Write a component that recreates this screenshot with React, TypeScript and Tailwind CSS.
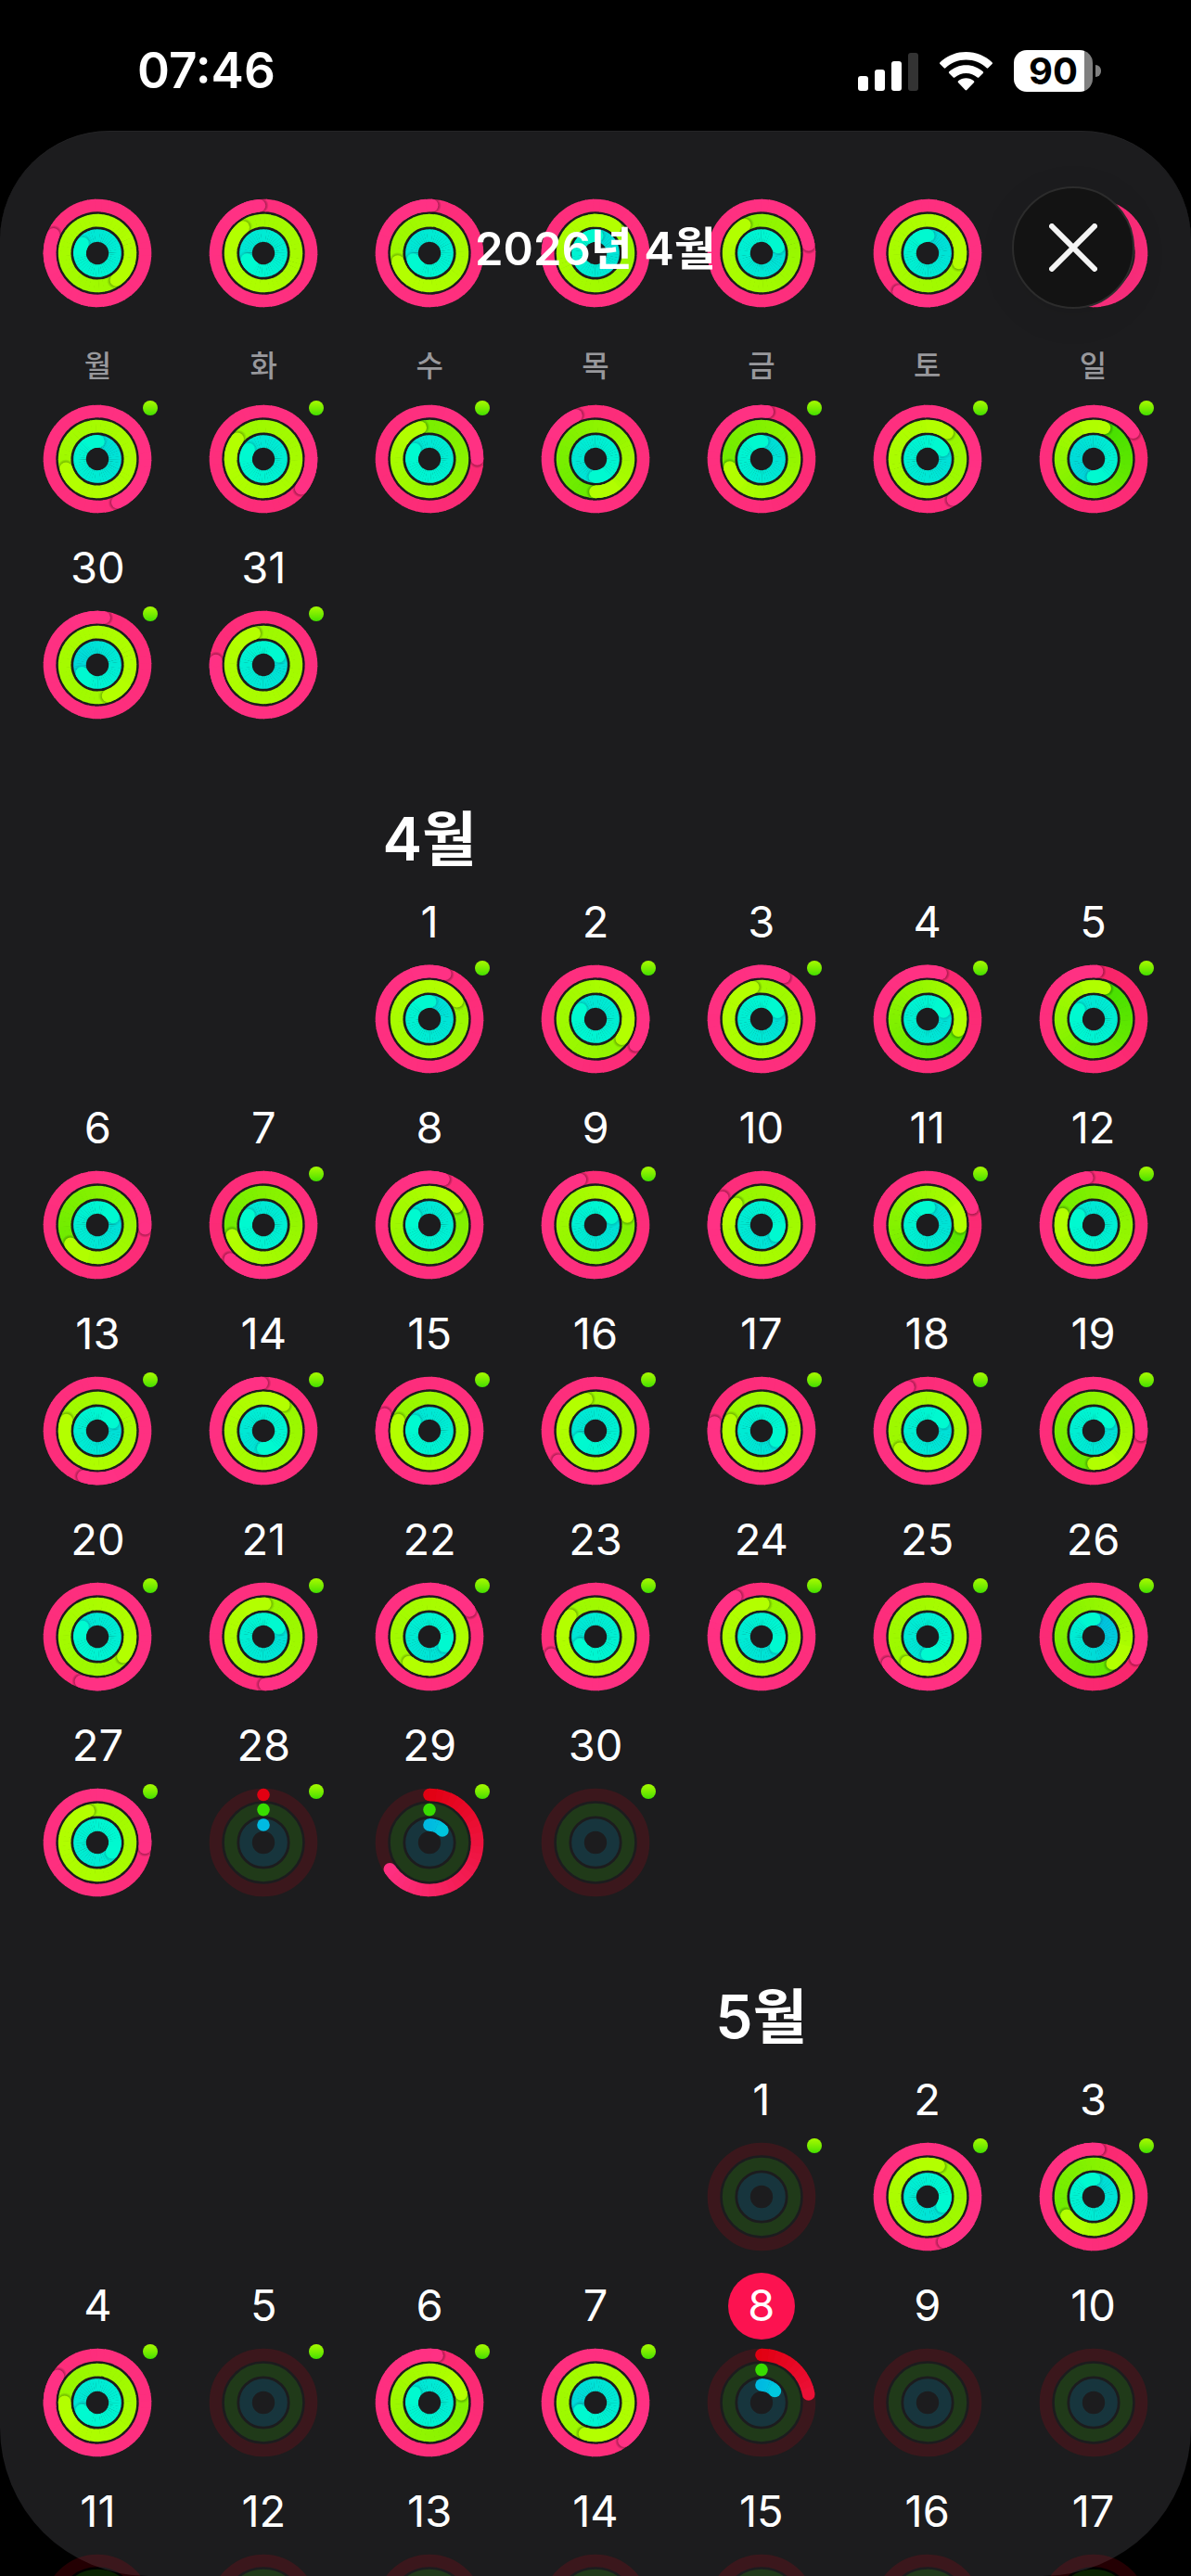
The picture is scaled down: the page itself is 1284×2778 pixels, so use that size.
import { useId } from "react";
import clsx from "clsx";

// [completed laps, degrees into the current lap]
type Ring = [number, number];

interface Day {
  label?: string;
  rings?: [Ring, Ring, Ring];
  workout?: boolean;
  today?: boolean;
}

// depth: how far the colour falls back under the tip, shade: tip shadow strength
const TRACKS = [
  { r: 51.5, from: [226, 0, 18], to: [255, 49, 132], depth: 0.5, shade: 0.8 },
  { r: 35.4, from: [56, 220, 0], to: [180, 255, 0], depth: 0.95, shade: 0.65 },
  { r: 19, from: [0, 186, 225], to: [0, 250, 208], depth: 0.95, shade: 0.3 },
];
const STROKE = 13.6;

const MARCH_PREVIOUS: Day[] = [
  { rings: [[6, 293], [5, 145], [2, 303]] },
  { rings: [[6, 355], [5, 322], [2, 248]] },
  { rings: [[6, 3], [4, 255], [2, 248]] },
  { rings: [[6, 285], [4, 37], [2, 5]] },
  { rings: [[6, 80], [2, 329], [2, 70]] },
  { rings: [[6, 217], [5, 107], [2, 2]] },
  { rings: [[3, 300], [3, 200], [2, 100]] },
];

const MARCH_CURRENT: Day[] = [
  { rings: [[6, 155], [5, 253], [2, 3]], workout: true },
  { rings: [[4, 128], [4, 308], [2, 303]], workout: true },
  { rings: [[3, 90], [1, 344], [2, 303]], workout: true },
  { rings: [[4, 336], [1, 180], [2, 182]] },
  { rings: [[3, 7], [1, 255], [2, 2]], workout: true },
  { rings: [[6, 148], [4, 37], [2, 60]], workout: true },
  { rings: [[3, 56], [1, 19], [1, 182]], workout: true },
];

const MARCH_LAST: Day[] = [
  { label: "30", rings: [[5, 8], [5, 161], [1, 242]], workout: true },
  { label: "31", rings: [[4, 275], [4, 344], [2, 61]], workout: true },
];

const APRIL: Day[] = [
  { label: "1", rings: [[5, 19], [4, 57], [2, 2]], workout: true },
  { label: "2", rings: [[4, 123], [3, 127], [2, 303]], workout: true },
  { label: "3", rings: [[5, 28], [4, 345], [2, 66]], workout: true },
  { label: "4", rings: [[3, 16], [1, 110], [2, 65]], workout: true },
  { label: "5", rings: [[2, 4], [1, 20], [2, 303]], workout: true },
  { label: "6", rings: [[4, 94], [1, 235], [2, 63]] },
  { label: "7", rings: [[3, 224], [1, 252], [2, 303]], workout: true },
  { label: "8", rings: [[5, 17], [2, 56], [2, 303]] },
  { label: "9", rings: [[3, 341], [2, 75], [2, 66]], workout: true },
  { label: "10", rings: [[5, 305], [3, 310], [2, 127]] },
  { label: "11", rings: [[3, 69], [1, 93], [2, 5]], workout: true },
  { label: "12", rings: [[3, 352], [1, 289], [2, 303]], workout: true },
  { label: "13", rings: [[5, 197], [5, 289], [2, 61]], workout: true },
  { label: "14", rings: [[5, 358], [4, 38], [2, 181]], workout: true },
  { label: "15", rings: [[5, 290], [3, 289], [2, 303]], workout: true },
  { label: "16", rings: [[5, 231], [4, 344], [2, 243]], workout: true },
  { label: "17", rings: [[4, 280], [4, 289], [2, 125]], workout: true },
  { label: "18", rings: [[4, 336], [4, 237], [2, 61]], workout: true },
  { label: "19", rings: [[3, 95], [1, 180], [2, 61]], workout: true },
  { label: "20", rings: [[5, 200], [4, 128], [2, 303]], workout: true },
  { label: "21", rings: [[6, 178], [4, 3], [2, 61]], workout: true },
  { label: "22", rings: [[5, 57], [5, 219], [2, 122]], workout: true },
  { label: "23", rings: [[5, 248], [4, 310], [2, 243]], workout: true },
  { label: "24", rings: [[4, 327], [4, 3], [2, 125]], workout: true },
  { label: "25", rings: [[5, 236], [4, 219], [2, 181]], workout: true },
  { label: "26", rings: [[2, 117], [1, 145], [1, 3]], workout: true },
  { label: "27", rings: [[6, 96], [5, 344], [3, 124]], workout: true },
  { label: "28", rings: [[0, 0], [0, 0], [0, 0]], workout: true },
  { label: "29", rings: [[0, 236], [0, 0], [0, 47]], workout: true },
  { label: "30", workout: true },
];

const MAY: Day[] = [
  { label: "1", workout: true },
  { label: "2", rings: [[6, 160], [4, 20], [2, 123]], workout: true },
  { label: "3", rings: [[3, 6], [1, 235], [2, 2]], workout: true },
  { label: "4", rings: [[5, 304], [3, 271], [2, 243]], workout: true },
  { label: "5", workout: true },
  { label: "6", rings: [[3, 9], [2, 75], [2, 303]], workout: true },
  { label: "7", rings: [[5, 143], [4, 199], [1, 243]], workout: true },
  { label: "8", rings: [[0, 80], [0, 0], [0, 49]], today: true },
  { label: "9" },
  { label: "10" },
  { label: "11" },
  { label: "12" },
  { label: "13" },
  { label: "14" },
  { label: "15" },
  { label: "16" },
  { label: "17" },
];

const WEEKDAYS = ["월", "화", "수", "목", "금", "토", "일"];

function mix(from: number[], to: number[], t: number) {
  const k = Math.min(1, Math.max(0, t));
  return `rgb(${from.map((c, i) => Math.round(c + (to[i] - c) * k)).join(",")})`;
}

function point(r: number, deg: number) {
  const a = ((deg - 90) * Math.PI) / 180;
  return [60 + r * Math.cos(a), 60 + r * Math.sin(a)];
}

function arc(r: number, start: number, end: number) {
  const [x1, y1] = point(r, start);
  const [x2, y2] = point(r, end);
  return `M${x1.toFixed(2)} ${y1.toFixed(2)}A${r} ${r} 0 0 1 ${x2.toFixed(2)} ${y2.toFixed(2)}`;
}

function RingArc({ track, ring, shadow }: { track: (typeof TRACKS)[number]; ring: Ring; shadow: string }) {
  const { r, from, to, depth, shade } = track;
  const [laps, deg] = ring;
  const full = laps > 0;
  const start = full ? deg - 360 : 0;
  const span = deg - start;
  const base = full ? 1 - depth / (laps + deg / 360) : 0;
  const tone = (at: number) => (full ? base + (1 - base) * at : (at * span) / 240);
  const steps = Math.ceil(span / 8);
  const tip = point(r, deg);
  const ahead = point(r, deg + 70 / r);

  return (
    <g fill="none" strokeWidth={STROKE}>
      {!full && <circle cx={60} cy={60 - r} r={STROKE / 2} fill={mix(from, to, 0)} stroke="none" />}
      {Array.from({ length: steps }, (_, i) => (
        <path
          key={i}
          d={arc(r, start + (span * i) / steps, start + (span * (i + 1)) / steps + (i < steps - 1 ? 1 : 0))}
          stroke={mix(from, to, tone((i + 0.5) / steps))}
        />
      ))}
      {full && <circle cx={ahead[0]} cy={ahead[1]} r={9} fill={`url(#${shadow})`} fillOpacity={shade} stroke="none" />}
      {full && <path d={arc(r, deg - 40, deg)} stroke={mix(from, to, tone(0.96))} />}
      {span > 0 && <circle cx={tip[0]} cy={tip[1]} r={STROKE / 2} fill={mix(from, to, tone(0.98))} stroke="none" />}
    </g>
  );
}

function ActivityRings({ rings }: { rings?: Day["rings"] }) {
  const shadow = useId();
  return (
    <svg className="size-[120px]" viewBox="0 0 120 120" aria-hidden="true">
      <radialGradient id={shadow}>
        <stop offset="0.55" stopColor="#000" stopOpacity="0.5" />
        <stop offset="0.8" stopColor="#000" stopOpacity="0.22" />
        <stop offset="1" stopColor="#000" stopOpacity="0" />
      </radialGradient>
      {TRACKS.map((track, i) => (
        <g key={track.r}>
          {!(rings && rings[i][0] > 0) && (
            <circle
              cx={60}
              cy={60}
              r={track.r}
              fill="none"
              stroke={mix(track.from, track.from, 0)}
              strokeOpacity={0.16}
              strokeWidth={STROKE}
            />
          )}
          {rings && <RingArc track={track} ring={rings[i]} shadow={shadow} />}
        </g>
      ))}
    </svg>
  );
}

function DayCell({ day, className }: { day: Day; className?: string }) {
  return (
    <button className={clsx("flex flex-col items-center pb-[22px]", className)}>
      {day.label && (
        <span
          className={clsx(
            "mb-2 flex size-[72px] items-center justify-center rounded-full pb-1 text-[47px] leading-none",
            day.today && "bg-[#fc1250]",
          )}
        >
          {day.label}
        </span>
      )}
      <span className="relative">
        <ActivityRings rings={day.rings} />
        {day.workout && (
          <span className="absolute -top-[3px] -right-[5px] size-4 rounded-full bg-linear-to-b from-[#a6fa00] to-[#3fdf00]" />
        )}
      </span>
    </button>
  );
}

function Week({ days }: { days: Day[] }) {
  return (
    <div className="grid grid-cols-7">
      {days.map((day, i) => (
        <DayCell key={i} day={day} />
      ))}
    </div>
  );
}

function Month({ title, start, days }: { title: string; start: string; days: Day[] }) {
  return (
    <section className="grid grid-cols-7">
      <h2
        className={clsx(
          "flex h-40 items-end justify-center pb-[10px] text-[64px] leading-[88px] font-semibold whitespace-nowrap",
          start,
        )}
      >
        {title}
      </h2>
      {days.map((day, i) => (
        <DayCell key={i} day={day} className={i === 0 ? start : undefined} />
      ))}
    </section>
  );
}

function StatusBar() {
  return (
    <header className="flex h-[141px] shrink-0 items-center justify-between pt-3 pr-[97px] pl-[148px]">
      <time className="text-[53px] leading-none font-semibold">07:46</time>
      <div className="flex items-center gap-[23px]">
        <svg width="65" height="42" viewBox="0 0 65 42" fill="#fff" aria-label="신호">
          <rect x="0" y="26" width="11" height="16" rx="3" />
          <rect x="18" y="19" width="11" height="23" rx="3" />
          <rect x="36" y="10" width="11" height="32" rx="3" />
          <rect x="54" y="1" width="11" height="41" rx="3" fillOpacity="0.2" />
        </svg>
        <svg width="57" height="42" viewBox="0 0 57 42" fill="#fff" aria-label="Wi-Fi">
          <path d="M28.5 0C39.5 0 49.5 4.300 56.600 11.300c.5.5.5 1.200 0 1.700l-4.300 4.300c-.5.5-1.200.5-1.700 0C44.800 11.900 37 8.600 28.500 8.600S12.200 11.900 6.400 17.300c-.5.5-1.200.5-1.700 0L.4 13c-.5-.5-.5-1.200 0-1.700C7.500 4.300 17.500 0 28.500 0z" />
          <path d="M28.5 14.200c7.100 0 13.500 2.700 18.300 7.100.5.5.5 1.200 0 1.700l-4.500 4.500c-.4.4-1.100.5-1.600 0-3.300-2.800-7.500-4.600-12.200-4.600s-8.900 1.700-12.200 4.600c-.5.4-1.200.4-1.600 0L10.200 23c-.5-.5-.5-1.200 0-1.700 4.800-4.400 11.200-7.100 18.300-7.100z" />
          <path d="M28.5 28.300c3.200 0 6.100 1.100 8.400 3 .6.5.6 1.200.1 1.700l-7.700 8c-.5.5-1.200.5-1.700 0l-7.600-8c-.5-.5-.5-1.200.1-1.700 2.300-1.900 5.200-3 8.400-3z" />
        </svg>
        <div className="flex items-center gap-[3px]">
          <div className="flex h-[45px] w-[85px] items-center justify-center rounded-[14px] bg-linear-to-r from-white from-90% to-[#808080] to-90% text-[40px] leading-none font-bold text-black">
            90
          </div>
          <div className="h-[13px] w-[6px] rounded-r-full bg-[#808080]" />
        </div>
      </div>
    </header>
  );
}

export default function App() {
  return (
    <div className="flex h-screen flex-col overflow-hidden bg-black font-['Inter','Noto_Sans_CJK_KR',sans-serif] text-white">
      <StatusBar />
      <main className="relative min-h-0 flex-1 rounded-t-[118px] rounded-b-[160px] border-t border-[#242426] bg-[#1c1c1e] px-4 pt-[71px]">
        <Week days={MARCH_PREVIOUS} />
        <div className="grid h-20 grid-cols-7 items-center text-center text-[32px] leading-none font-medium text-[#98989c]">
          {WEEKDAYS.map((name) => (
            <span key={name}>{name}</span>
          ))}
        </div>
        <Week days={MARCH_CURRENT} />
        <Week days={MARCH_LAST} />
        <Month title="4월" start="col-start-3" days={APRIL} />
        <Month title="5월" start="col-start-5" days={MAY} />

        <h1 className="absolute inset-x-0 top-[97px] text-center text-[49px] leading-[60px] font-semibold">
          2026년 4월
        </h1>
        <button
          aria-label="닫기"
          className="absolute top-[59px] right-[61px] flex size-[132px] items-center justify-center rounded-full border-2 border-[#2c2c2c] bg-[#131313] shadow-[0_8px_40px_rgba(0,0,0,0.08)]"
        >
          <svg width="52" height="52" viewBox="0 0 52 52" stroke="#f4f4f4" strokeWidth="6" strokeLinecap="round">
            <path d="M3 3l46 46M49 3L3 49" />
          </svg>
        </button>
      </main>
    </div>
  );
}
